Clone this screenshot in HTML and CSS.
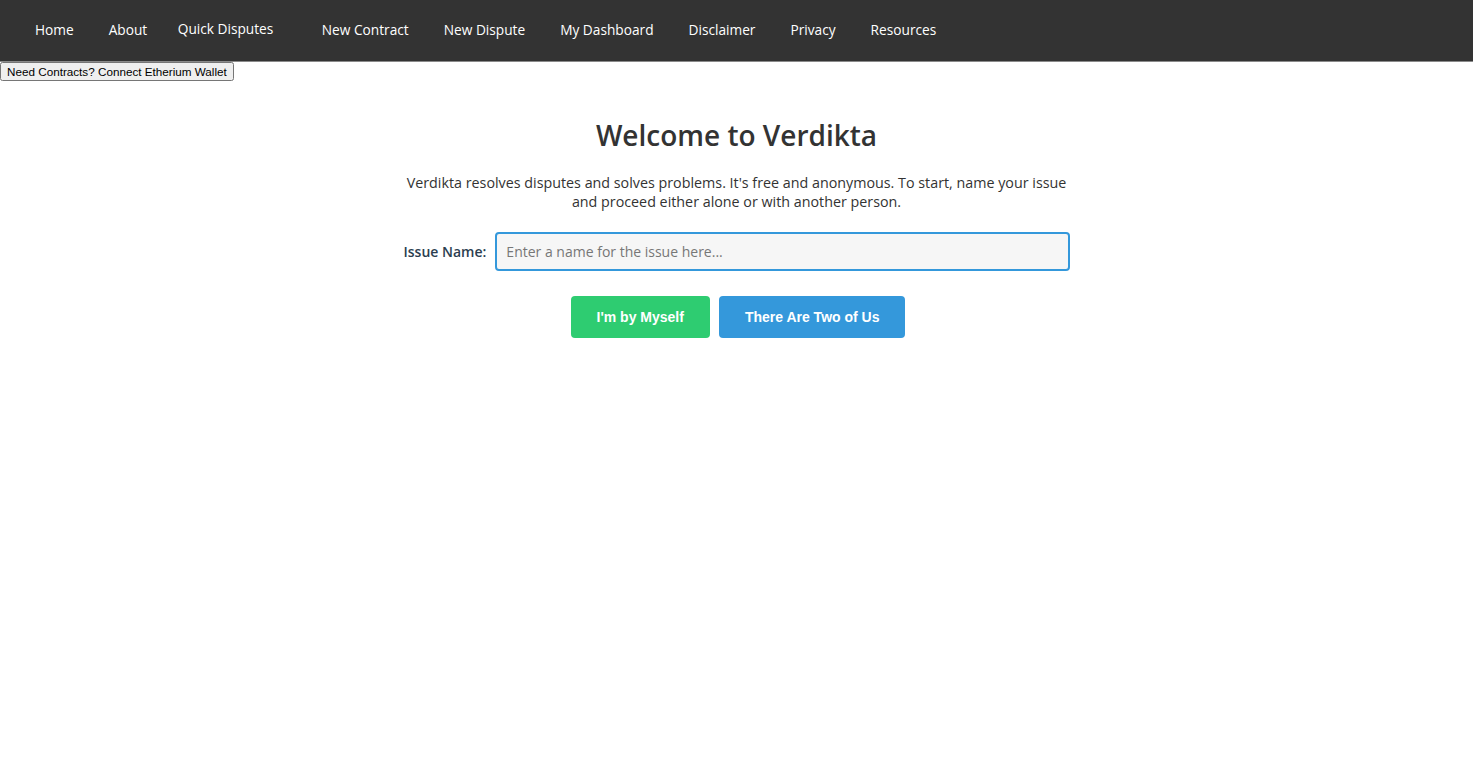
FILE: index.html
```html
<!DOCTYPE html>
<html>
<head>
  <title>Verdikta</title>
  <meta charset="UTF-8">
  <link rel="stylesheet" href="styles.css">
</head>
<body>
  <nav class="navbar">
    <a href="#" class="nav-link">Home</a>
    <a href="#" class="nav-link">About</a>
    <button class="nav-link nav-dropdown">Quick Disputes</button>
    <a href="#" class="nav-link">New Contract</a>
    <a href="#" class="nav-link">New Dispute</a>
    <a href="#" class="nav-link">My Dashboard</a>
    <a href="#" class="nav-link">Disclaimer</a>
    <a href="#" class="nav-link">Privacy</a>
    <a href="#" class="nav-link">Resources</a>
  </nav>
  <button class="wallet-button">Need Contracts? Connect Etherium Wallet</button>

  <main class="welcome">
    <h1>Welcome to Verdikta</h1>
    <p class="intro">
      Verdikta resolves disputes and solves problems. It's free and anonymous. To start, name your issue
      and proceed either alone or with another person.
    </p>
    <div class="issue-row">
      <label for="issue-name">Issue Name:</label>
      <input type="text" id="issue-name" placeholder="Enter a name for the issue here...">
    </div>
    <div class="button-group">
      <button class="btn btn-solo">I'm by Myself</button>
      <button class="btn btn-pair">There Are Two of Us</button>
    </div>
  </main>
</body>
</html>
```

FILE: styles.css
```css
body {
  margin: 0;
  font-family: "Open Sans", "DejaVu Sans", sans-serif;
  color: #333;
  background-color: #ffffff;
}

.navbar {
  display: flex;
  align-items: center;
  height: 61px;
  padding: 0 0 0 17.5px;
  background-color: #333333;
  border-bottom: 1px solid #8a8a8a;
}
.nav-link {
  color: #ffffff;
  text-decoration: none;
  font-family: "Open Sans", sans-serif;
  font-size: 13.7px;
  padding: 0 17.5px;
  line-height: 1;
  margin-top: -2px;
}
.nav-dropdown {
  background: none;
  border: none;
  cursor: pointer;
  padding: 0 31px 2px 13px;
  font-family: "Open Sans", sans-serif;
  font-size: 13.7px;
}

.wallet-button {
  display: block;
  margin: 0;
  padding: 1px 5px;
  font-family: "Liberation Sans", Arial, sans-serif;
  font-size: 11.7px;
}

.welcome {
  max-width: 666px;
  margin: 0 auto;
  padding-top: 35px;
  text-align: center;
}
.welcome h1 {
  margin: 0 0 19px;
  font-size: 28px;
  font-weight: 600;
  color: #333;
}
.intro {
  margin: 0 0 21px;
  font-size: 14.3px;
  line-height: 19px;
}

.issue-row {
  display: flex;
  align-items: center;
  gap: 9px;
}
.issue-row label {
  font-size: 14px;
  font-weight: 600;
  color: #2c3e50;
}
.issue-row input {
  flex-grow: 1;
  height: 39px;
  box-sizing: border-box;
  padding: 0 9px;
  background-color: #f6f6f6;
  border: 2px solid #3498db;
  border-radius: 4px;
  font-family: "Open Sans", sans-serif;
  font-size: 14px;
  color: #333;
  outline: none;
}
.issue-row input::placeholder {
  color: #777;
}

.button-group {
  display: flex;
  justify-content: center;
  gap: 9px;
  margin-top: 25px;
  padding-left: 3px;
}
.btn {
  height: 42px;
  padding: 0 26px;
  border: none;
  border-radius: 4px;
  color: #ffffff;
  font-family: "Liberation Sans", Arial, sans-serif;
  font-size: 14px;
  font-weight: bold;
  cursor: pointer;
}
.btn-solo {
  background-color: #2ecc71;
}
.btn-pair {
  background-color: #3498db;
}
```
